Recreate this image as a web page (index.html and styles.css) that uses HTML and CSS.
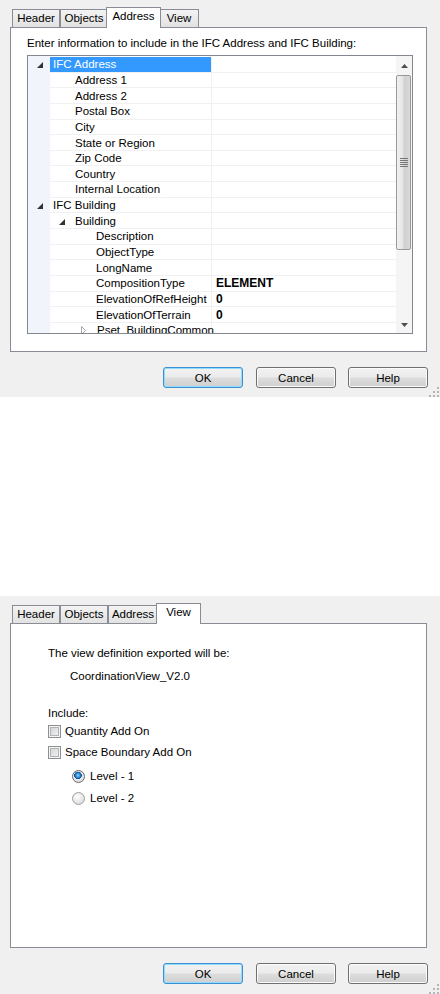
FILE: index.html
```html
<!DOCTYPE html>
<html>
<head>
<meta charset="utf-8">
<link rel="stylesheet" href="styles.css">
</head>
<body>
<div class="dialog">
  <div class="tabs">
    <div class="tab t-header">Header</div>
    <div class="tab t-objects">Objects</div>
    <div class="tab t-address sel">Address</div>
    <div class="tab t-view">View</div>
  </div>
  <div class="panel">
    <div class="intro">Enter information to include in the IFC Address and IFC Building:</div>
    <div class="tree">
      <div class="tree-body">
        <div class="row l0 selected"><div class="name"><span class="tw"><svg width="6" height="6" viewBox="0 0 6 6"><path d="M6 0V6H0Z" fill="#333"/></svg></span>IFC Address</div><div class="val"></div></div>
        <div class="row l1"><div class="name"><span class="tw"></span>Address 1</div><div class="val"></div></div>
        <div class="row l1"><div class="name"><span class="tw"></span>Address 2</div><div class="val"></div></div>
        <div class="row l1"><div class="name"><span class="tw"></span>Postal Box</div><div class="val"></div></div>
        <div class="row l1"><div class="name"><span class="tw"></span>City</div><div class="val"></div></div>
        <div class="row l1"><div class="name"><span class="tw"></span>State or Region</div><div class="val"></div></div>
        <div class="row l1"><div class="name"><span class="tw"></span>Zip Code</div><div class="val"></div></div>
        <div class="row l1"><div class="name"><span class="tw"></span>Country</div><div class="val"></div></div>
        <div class="row l1"><div class="name"><span class="tw"></span>Internal Location</div><div class="val"></div></div>
        <div class="row l0"><div class="name"><span class="tw"><svg width="6" height="6" viewBox="0 0 6 6"><path d="M6 0V6H0Z" fill="#333"/></svg></span>IFC Building</div><div class="val"></div></div>
        <div class="row l1"><div class="name"><span class="tw"><svg width="6" height="6" viewBox="0 0 6 6"><path d="M6 0V6H0Z" fill="#333"/></svg></span>Building</div><div class="val"></div></div>
        <div class="row l2"><div class="name"><span class="tw"></span>Description</div><div class="val"></div></div>
        <div class="row l2"><div class="name"><span class="tw"></span>ObjectType</div><div class="val"></div></div>
        <div class="row l2"><div class="name"><span class="tw"></span>LongName</div><div class="val"></div></div>
        <div class="row l2"><div class="name"><span class="tw"></span>CompositionType</div><div class="val">ELEMENT</div></div>
        <div class="row l2"><div class="name"><span class="tw"></span>ElevationOfRefHeight</div><div class="val">0</div></div>
        <div class="row l2"><div class="name"><span class="tw"></span>ElevationOfTerrain</div><div class="val">0</div></div>
        <div class="row l2b"><div class="name"><span class="tw"><svg width="6" height="9" viewBox="0 0 6 9"><path d="M0.5 0.5L4.5 4.5L0.5 8.5Z" fill="#fff" stroke="#a6a6a6"/></svg></span>Pset_BuildingCommon</div><div class="val"></div></div>
      </div>
      <div class="vscroll">
        <div class="sb-btn"><svg width="7" height="4" viewBox="0 0 7 4"><path d="M3.5 0L7 4H0Z" fill="#4d4d4d"/></svg></div>
        <div class="thumb"><svg width="8" height="9" viewBox="0 0 8 9"><path d="M0 0.5H8M0 2.5H8M0 4.5H8M0 6.5H8M0 8.5H8" stroke="#777" stroke-width="1"/></svg></div>
        <div class="sb-fill"></div>
        <div class="sb-btn"><svg width="7" height="4" viewBox="0 0 7 4"><path d="M0 0H7L3.5 4Z" fill="#4d4d4d"/></svg></div>
      </div>
    </div>
  </div>
  <div class="buttons">
    <button class="btn default">OK</button>
    <button class="btn b-cancel">Cancel</button>
    <button class="btn b-help">Help</button>
  </div>
  <svg class="grip" width="10" height="10" viewBox="0 0 10 10"><g fill="#b5b5b5"><rect x="8" y="0" width="2" height="2"/><rect x="4" y="4" width="2" height="2"/><rect x="8" y="4" width="2" height="2"/><rect x="0" y="8" width="2" height="2"/><rect x="4" y="8" width="2" height="2"/><rect x="8" y="8" width="2" height="2"/></g></svg>
</div>

<div class="dialog dialog-2">
  <div class="tabs">
    <div class="tab t-header">Header</div>
    <div class="tab t-objects">Objects</div>
    <div class="tab t-address">Address</div>
    <div class="tab t-view sel">View</div>
  </div>
  <div class="panel panel-view">
    <div class="vline">The view definition exported will be:</div>
    <div class="vline vname">CoordinationView_V2.0</div>
    <div class="vline vinclude">Include:</div>
    <div class="opt cb1"><span class="cb"></span>Quantity Add On</div>
    <div class="opt cb2"><span class="cb"></span>Space Boundary Add On</div>
    <div class="opt radio r1"><span class="rd on"></span>Level - 1</div>
    <div class="opt radio r2"><span class="rd"></span>Level - 2</div>
  </div>
  <div class="buttons">
    <button class="btn default">OK</button>
    <button class="btn b-cancel">Cancel</button>
    <button class="btn b-help">Help</button>
  </div>
  <svg class="grip" width="10" height="10" viewBox="0 0 10 10"><g fill="#b5b5b5"><rect x="8" y="0" width="2" height="2"/><rect x="4" y="4" width="2" height="2"/><rect x="8" y="4" width="2" height="2"/><rect x="0" y="8" width="2" height="2"/><rect x="4" y="8" width="2" height="2"/><rect x="8" y="8" width="2" height="2"/></g></svg>
</div>
</body>
</html>
```
FILE: styles.css
```css
* { box-sizing: border-box; }
html, body { margin: 0; padding: 0; background: #fff; }
body {
  font-family: "Liberation Sans", Arial, sans-serif;
  font-size: 11.5px;
  color: #000;
  width: 440px;
}
.dialog {
  position: relative;
  height: 397px;
  background: #f0f0f0;
  padding-top: 7px;
}
.dialog-2 { margin-top: 199px; height: 398px; }

/* tabs */
.tabs {
  display: flex;
  align-items: flex-end;
  height: 20px;
  margin-left: 12px;
}
.tab {
  height: 18px;
  border: 1px solid #898c95;
  border-bottom: none;
  background: linear-gradient(#f3f3f3, #e2e2e2);
  text-align: center;
  line-height: 17px;
  flex: none;
}
.t-header { width: 48px; }
.t-objects { width: 48px; }
.t-address { width: 50px; }
.t-view { width: 40px; }
.tab.sel {
  position: relative;
  z-index: 2;
  height: 21px;
  margin-bottom: -1px;
  margin-left: -2px;
  margin-right: -2px;
  background: #fff;
  line-height: 17px;
}
.t-address.sel { width: 55px; }
.t-view.sel { width: 45px; }

/* panel */
.panel {
  margin-left: 10px;
  width: 417px;
  height: 325px;
  border: 1px solid #898c95;
  background: #fff;
  padding-left: 16px;
}
.intro {
  margin-top: 9px;
  line-height: 13px;
  white-space: nowrap;
}
.tree {
  margin-top: 5px;
  width: 386px;
  height: 279px;
  border: 1px solid #828790;
  display: flex;
}
.tree-body {
  flex: 1;
  padding-top: 1px;
  overflow: hidden;
  background: linear-gradient(to right, #f1f5fb 22px, #fff 22px);
}
.row {
  display: flex;
  height: 15.65px;
  margin-left: 22px;
  border-bottom: 1px solid #f1f1f1;
  line-height: 14px;
}
.name {
  width: 162px;
  flex: none;
  display: flex;
  align-items: center;
  border-right: 1px solid #f1f1f1;
  white-space: nowrap;
}
.val {
  flex: 1;
  padding-left: 4px;
  font-weight: bold;
  font-size: 12px;
  display: flex;
  align-items: center;
}
.selected .name { background: #3399ff; color: #fff; }
.tw {
  width: 16px;
  flex: none;
  display: flex;
  align-items: center;
  padding-top: 2px;
}
.l0 .tw { margin-left: -13px; }
.l1 .tw { margin-left: 9px; }
.l2 .tw, .l2b .tw { margin-left: 30px; }
.l2b .tw { margin-left: 31px; padding-top: 1px; }

/* scrollbar */
.vscroll {
  width: 16px;
  flex: none;
  background: #f5f5f5;
  display: flex;
  flex-direction: column;
  padding-top: 1px;
}
.sb-btn {
  height: 17px;
  display: flex;
  align-items: center;
  justify-content: center;
  flex: none;
}
.thumb {
  height: 175px;
  width: 15px;
  flex: none;
  border: 1px solid #989898;
  border-radius: 2px;
  background: linear-gradient(to right, #f2f2f2, #e4e4e4 45%, #cfcfcf 55%, #d9d9d9);
  display: flex;
  align-items: center;
  justify-content: center;
  margin-top: 1px;
}
.sb-fill { flex: 1; }

/* buttons */
.buttons {
  display: flex;
  margin-top: 15px;
  padding-left: 163px;
}
.btn {
  width: 80px;
  height: 21px;
  padding: 0;
  border: 1px solid #707070;
  border-radius: 3px;
  background: linear-gradient(#f2f2f2 0%, #ebebeb 48%, #dddddd 52%, #cfcfcf 100%);
  box-shadow: inset 0 0 0 1px #fbfbfb;
  font-family: "Liberation Sans", Arial, sans-serif;
  font-size: 11.5px;
  color: #000;
  flex: none;
}
.btn.default {
  border-color: #3c8fd2;
  box-shadow: inset 0 0 0 1px #8fdcff;
}
.b-cancel { margin-left: 13px; }
.b-help { margin-left: 12px; }

.grip {
  position: absolute;
  right: 1px;
  bottom: 0px;
}

/* view panel */
.panel-view {
  padding-left: 37px;
  padding-top: 22px;
}
.vline { line-height: 14px; white-space: nowrap; }
.vname { margin-top: 9px; padding-left: 22px; }
.vinclude { margin-top: 23px; }
.opt {
  display: flex;
  align-items: center;
  height: 14px;
  white-space: nowrap;
}
.cb1 { margin-top: 4px; }
.cb2 { margin-top: 7px; }
.r1 { margin-top: 10px; }
.r2 { margin-top: 8px; }
.radio { padding-left: 24px; }
.cb {
  width: 13px;
  height: 13px;
  flex: none;
  border: 1px solid #8e8f8f;
  background: linear-gradient(135deg, #cfcfcf, #f6f6f6);
  box-shadow: inset 0 0 0 1px #f4f4f4, inset 0 0 0 2px #aeb3b9;
  margin-right: 4px;
}
.rd {
  width: 13px;
  height: 13px;
  flex: none;
  border-radius: 50%;
  border: 1px solid #a0a0a0;
  background: radial-gradient(circle at 40% 35%, #ffffff 0%, #e6e6e6 55%, #cfcfcf 100%);
  margin-right: 5px;
  position: relative;
}
.rd.on {
  border-color: #6a6a6a;
  background:
    radial-gradient(circle at 45% 40%, #8fd3ff 0px, #2b8ad8 2.2px, #0d4d87 3.6px, transparent 4px),
    radial-gradient(circle at 40% 35%, #ffffff 0%, #e6e6e6 55%, #cfcfcf 100%);
}
```
